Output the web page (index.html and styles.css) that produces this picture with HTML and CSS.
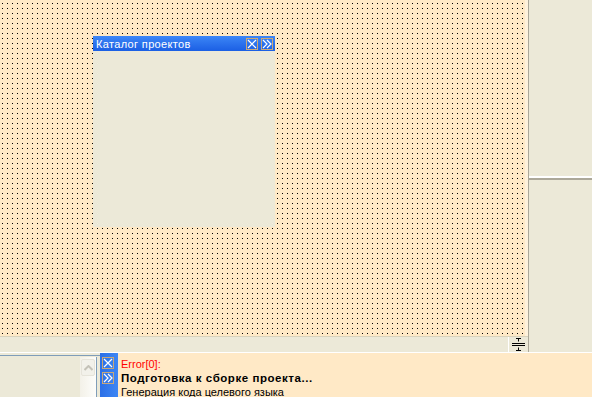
FILE: index.html
```html
<!DOCTYPE html>
<html lang="ru">
<head>
    <title>Проект</title>
    <link rel="stylesheet" href="styles.css">
</head>
<body>
    <div class="workspace">
        <div class="canvas-col">
            <div class="canvas">
                <div class="tool-window">
                    <div class="tool-title">
                        <span>Каталог проектов</span>
                        <span class="tbtn">
                            <svg width="10" height="10" viewBox="0 0 10 10"><path d="M1 1L9 9M9 1L1 9" stroke="#fff" stroke-width="1.2"/></svg>
                        </span>
                        <span class="tbtn">
                            <svg width="10" height="10" viewBox="0 0 10 10"><path d="M1 1L5 5L1 9M5 1L9 5L5 9" stroke="#fff" stroke-width="1.2" fill="none"/></svg>
                        </span>
                    </div>
                    <div class="tool-body"></div>
                </div>
            </div>
            <div class="hbar">
                <div class="hbar-track"></div>
                <div class="splitter">
                    <svg width="13" height="13" viewBox="0 0 13 13"><path d="M4 0.5H9M6.5 0.5V3.5M0 5.5H13M0 7.5H13M6.5 9.5V12.5M4 12.5H9" stroke="#000" stroke-width="1"/></svg>
                </div>
            </div>
        </div>
        <div class="side">
            <div class="side-top"></div>
            <div class="side-bottom"></div>
        </div>
    </div>
    <div class="output">
        <div class="out-left"></div>
        <div class="vscroll">
            <div class="up-btn">
                <svg width="9" height="6" viewBox="0 0 9 6"><path d="M0.5 5L4.5 1L8.5 5" stroke="#c4c2b8" stroke-width="2" fill="none"/></svg>
            </div>
        </div>
        <div class="tools">
            <span class="tbtn">
                <svg width="10" height="10" viewBox="0 0 10 10"><path d="M1 1L9 9M9 1L1 9" stroke="#fff" stroke-width="1.2"/></svg>
            </span>
            <span class="tbtn">
                <svg width="10" height="10" viewBox="0 0 10 10"><path d="M1 1L5 5L1 9M5 1L9 5L5 9" stroke="#fff" stroke-width="1.2" fill="none"/></svg>
            </span>
        </div>
        <div class="log">
            <div class="log-error">Error[0]:</div>
            <div class="log-bold">Подготовка к сборке проекта...</div>
            <div>Генерация кода целевого языка</div>
        </div>
    </div>
</body>
</html>
```

FILE: styles.css
```css
body {
    margin: 0;
    padding: 0;
    width: 592px;
    height: 397px;
    overflow: hidden;
    font-family: "Liberation Sans", Arial, sans-serif;
    font-size: 11px;
    background-color: #ece9d8;
}

.workspace {
    display: flex;
    height: 352px;
}

.canvas-col {
    flex: 1;
    display: flex;
    flex-direction: column;
}

/* dotted design grid, one black pixel every 5px */
.canvas {
    position: relative;
    flex: 1;
    background-color: #ffe9c6;
    background-image: url("data:image/svg+xml,%3Csvg xmlns='http://www.w3.org/2000/svg' width='5' height='5'%3E%3Crect x='2' y='3' width='1' height='1' fill='%23000'/%3E%3C/svg%3E");
    background-size: 5px 5px;
    border-right: 3px solid #fff2dc;
}

.hbar {
    display: flex;
    height: 15px;
    border-top: 1px solid #d8d2bc;
}

.hbar-track {
    flex: 1;
    border-right: 1px solid #fff;
}

.splitter {
    width: 19px;
    display: flex;
    align-items: center;
    justify-content: center;
}

.side {
    width: 63px;
    display: flex;
    flex-direction: column;
    border-left: 1px solid #aca899;
}

.side-top {
    height: 176px;
    border-bottom: 2px solid #fff;
}

.side-bottom {
    flex: 1;
    border-top: 2px solid #aca899;
}

.tool-window {
    position: absolute;
    left: 93px;
    top: 36px;
    width: 182px;
    height: 191px;
    display: flex;
    flex-direction: column;
    background-color: #ece9d8;
}

.tool-title {
    height: 15px;
    display: flex;
    align-items: center;
    gap: 3px;
    padding: 0 2px 0 3px;
    color: #fff;
    letter-spacing: 0.35px;
    background: linear-gradient(#3c86f6, #1b5fe4);
}

.tool-title span:first-child {
    flex: 1;
}

.tbtn {
    width: 10px;
    height: 10px;
    border: 1px solid #c8a87a;
    display: flex;
    align-items: center;
    justify-content: center;
}

.tool-body {
    flex: 1;
}

.output {
    display: flex;
    height: 45px;
    border-top: 1px solid #fff;
    box-shadow: inset 0 2px 0 #ece9d8, inset 0 3px 0 #7f9db9;
}

.out-left {
    width: 80px;
    margin-top: 4px;
}

.vscroll {
    width: 16px;
    margin-top: 4px;
    border-right: 1px solid #7f9db9;
    background: linear-gradient(to right, #f3f1e8, #fdfdfb);
}

.up-btn {
    height: 15px;
    margin: 2px 1px 0 1px;
    border: 1px solid #e6e4da;
    border-radius: 2px;
    background-color: #f2f1ea;
    display: flex;
    align-items: center;
    justify-content: center;
}

.tools {
    width: 16px;
    margin-left: 3px;
    padding: 4px 0 0 2px;
    display: flex;
    flex-direction: column;
    gap: 3px;
    background: linear-gradient(to right, #2b6fe6, #3d86f4);
}

.log {
    flex: 1;
    padding: 4px 0 0 3px;
    background-color: #ffe9c6;
    line-height: 14px;
    color: #000;
}

.log-error {
    color: #ff0000;
}

.log-bold {
    font-weight: bold;
    font-size: 11.5px;
    letter-spacing: 0.55px;
}
```
